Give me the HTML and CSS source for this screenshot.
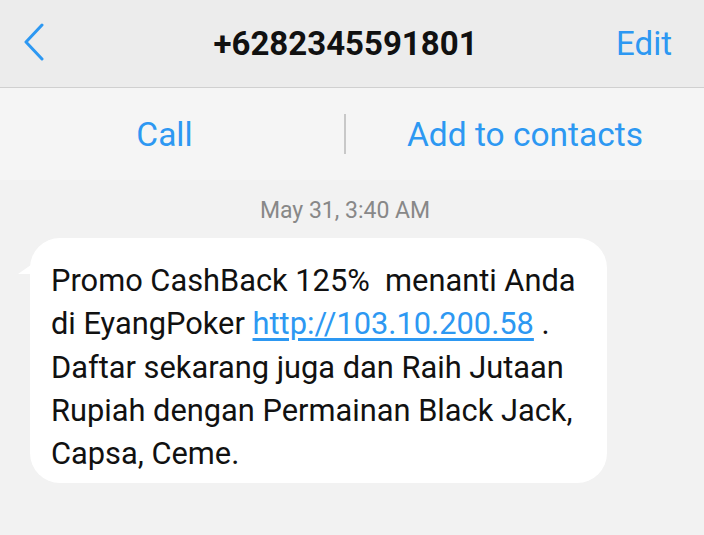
FILE: index.html
```html
<!DOCTYPE html>
<html lang="en">
  <head>
    <meta charset="UTF-8" />
    <meta name="viewport" content="width=device-width, initial-scale=1.0" />
    <title>+6282345591801</title>
    <link rel="stylesheet" href="styles.css">
  </head>
  <body>
    <header class="top-bar">
      <svg class="back" width="22" height="38" viewBox="0 0 22 38">
        <polyline points="19,2 3,19 19,36" fill="none" stroke="#2d98f2" stroke-width="3" stroke-linecap="round" stroke-linejoin="round" />
      </svg>
      <h1 class="title">+6282345591801</h1>
      <span class="edit">Edit</span>
    </header>

    <div class="actions">
      <span class="action">Call</span>
      <span class="sep"></span>
      <span class="action">Add to contacts</span>
    </div>

    <main class="thread">
      <div class="time">May 31, 3:40 AM</div>
      <div class="bubble">
        Promo CashBack 125%&nbsp; menanti Anda<br>
        di EyangPoker <a href="#">http://103.10.200.58</a> .<br>
        Daftar sekarang juga dan Raih Jutaan<br>
        Rupiah dengan Permainan Black Jack,<br>
        Capsa, Ceme.
      </div>
    </main>
  </body>
</html>
```

FILE: styles.css
```css
body {
  margin: 0;
  font-family: Roboto, "Noto Sans", sans-serif;
  background: #f2f2f2;
  width: 704px;
  height: 535px;
  overflow: hidden;
}

.top-bar {
  height: 87px;
  background: #ececec;
  border-bottom: 1px solid #d0d0d0;
  display: flex;
  align-items: center;
  padding: 0 32px 0 23px;
}

.back {
  display: block;
  margin-top: -3px;
}

.title {
  flex: 1;
  margin: 0;
  text-align: center;
  font-size: 33px;
  font-weight: 700;
  color: #111;
  padding-left: 30px;
}

.edit {
  color: #2d98f2;
  font-size: 33px;
}

.actions {
  height: 92px;
  background: #f5f5f5;
  display: grid;
  grid-template-columns: 344px 2px 1fr;
  align-items: center;
}

.action {
  color: #2d98f2;
  font-size: 33.5px;
  text-align: center;
}

.action:first-child {
  padding-right: 15px;
}

.sep {
  width: 2px;
  height: 40px;
  background: #c8c8c8;
}

.thread {
  padding: 17px 0 0 30px;
}

.time {
  width: 630px;
  text-align: center;
  color: #888;
  font-size: 23px;
  margin-bottom: 14px;
}

.bubble {
  position: relative;
  width: 535px;
  background: #fff;
  border-radius: 30px;
  padding: 21px 21px 8px 21px;
  font-size: 30.8px;
  line-height: 43.25px;
  color: #111;
}

.bubble::before {
  content: "";
  position: absolute;
  left: -12px;
  top: 22px;
  width: 20px;
  height: 14px;
  background: #fff;
  clip-path: polygon(0 100%, 100% 0, 100% 100%);
}

.bubble a {
  color: #2d98f2;
  text-decoration: underline;
  text-underline-offset: 4px;
}
```
